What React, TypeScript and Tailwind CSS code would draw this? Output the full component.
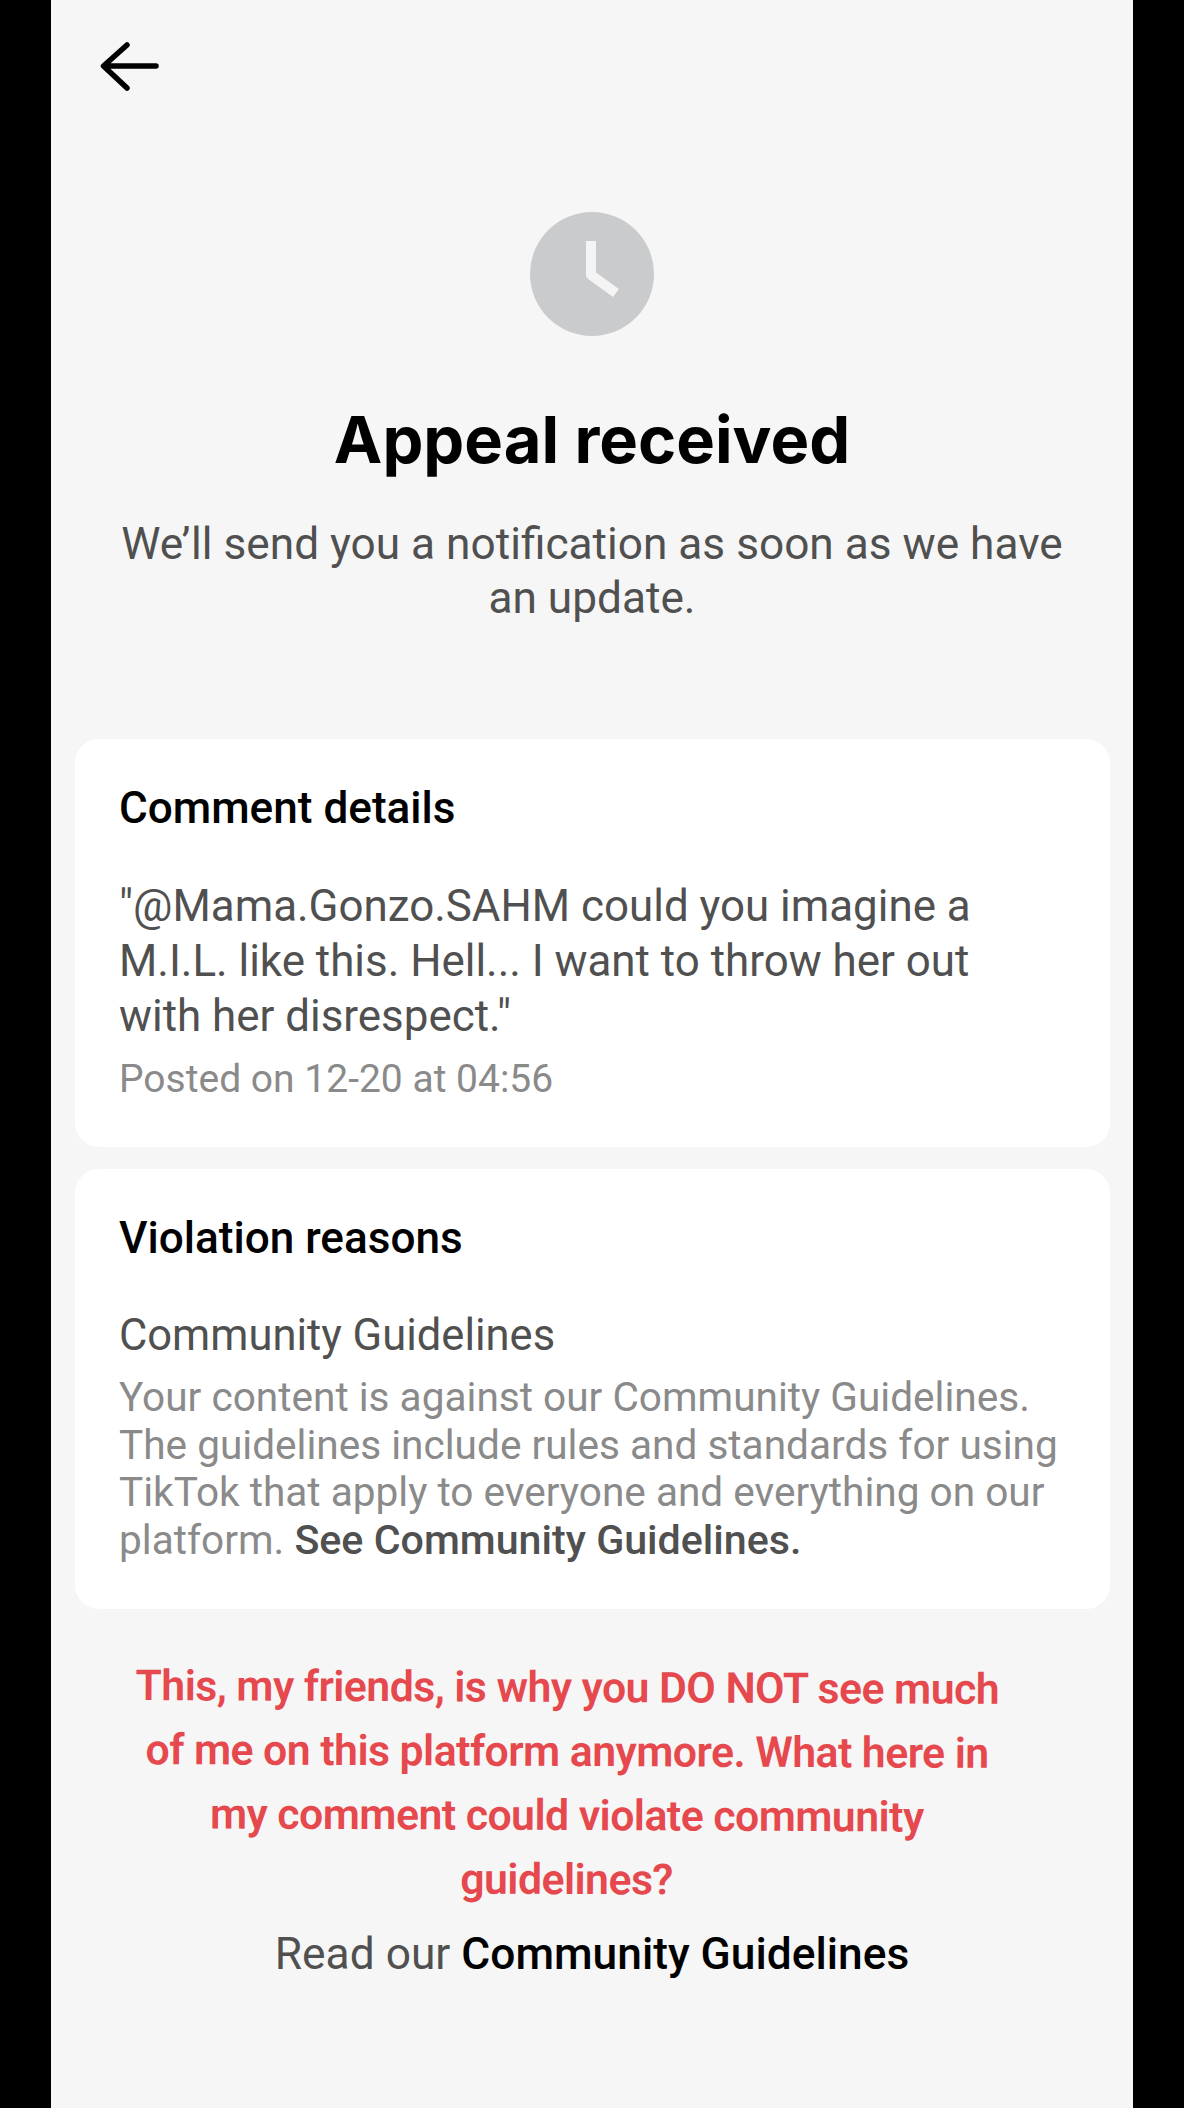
function BackArrow() {
  return (
    <svg width="60" height="49" viewBox="0 0 60 49" className="block">
      <path
        d="M56 24H4M27 3 3.5 24 27 46"
        fill="none"
        stroke="#000"
        strokeWidth="5.5"
        strokeLinecap="round"
        strokeLinejoin="round"
      />
    </svg>
  )
}

function ClockBadge() {
  return (
    <svg width="124" height="124" viewBox="0 0 124 124" className="block">
      <circle cx="62" cy="62" r="62" fill="#c9cbcc" />
      <path d="M61 29V63L86 81" fill="none" stroke="#f4f4f4" strokeWidth="10" strokeLinejoin="round" />
    </svg>
  )
}

export default function App() {
  return (
    <div className="min-h-[2108px] bg-black font-['Roboto',sans-serif]">
      <div className="mx-auto flex h-[2108px] w-[1082px] flex-col overflow-hidden bg-[#f6f6f6]">
        <div className="pl-[49px] pt-[42px]">
          <BackArrow />
        </div>

        <div className="mt-[121px] flex justify-center">
          <ClockBadge />
        </div>

        <h1 className="mt-[64px] text-center font-['Inter',sans-serif] text-[65px] font-bold leading-[80px] text-black">
          Appeal received
        </h1>
        <p className="mx-auto mt-[37px] w-[980px] text-center text-[44.2px] leading-[54px] text-[#505050]">
          We’ll send you a notification as soon as we have an update.
        </p>

        <section className="ml-6 mr-[23px] mt-[114px] h-[408px] rounded-[24px] bg-white pl-[44px] pr-[40px] pt-[43px]">
          <h2 className="text-[44.1px] font-medium leading-[52px] text-black">Comment details</h2>
          <p className="mt-[45px] w-[880px] text-[43.9px] leading-[55px] text-[#505050]">
            "@Mama.Gonzo.SAHM could you imagine a M.I.L. like this. Hell... I want to throw her out with her disrespect."
          </p>
          <p className="mt-[11px] text-[39px] leading-[48px] text-[#8a8a8a]">Posted on 12-20 at 04:56</p>
        </section>

        <section className="ml-6 mr-[23px] mt-[22px] h-[440px] rounded-[24px] bg-white pl-[44px] pr-[40px] pt-[43px]">
          <h2 className="text-[44.1px] font-medium leading-[52px] text-black">Violation reasons</h2>
          <p className="mt-[46px] text-[43.5px] leading-[52px] text-[#505050]">Community Guidelines</p>
          <p className="mt-[12px] text-[40.6px] leading-[47.5px] text-[#8a8a8a]">
            Your content is against our Community Guidelines. The guidelines include rules and standards for using TikTok
            that apply to everyone and everything on our platform.{" "}
            <span className="text-[41.2px] font-medium text-[#505050]">See Community Guidelines.</span>
          </p>
        </section>

        <p className="ml-[66px] mt-[46px] w-[900px] rotate-[0.25deg] text-center text-[42.7px] font-semibold leading-[64px] tracking-[-0.5px] text-[#e5484d]">
          This, my friends, is why you DO NOT see much of me on this platform anymore. What here in my comment could
          violate community guidelines?
        </p>

        <p className="mt-[17px] text-center text-[44.3px] leading-[52px] text-[#505050]">
          Read our <span className="font-medium text-black">Community Guidelines</span>
        </p>
      </div>
    </div>
  )
}
